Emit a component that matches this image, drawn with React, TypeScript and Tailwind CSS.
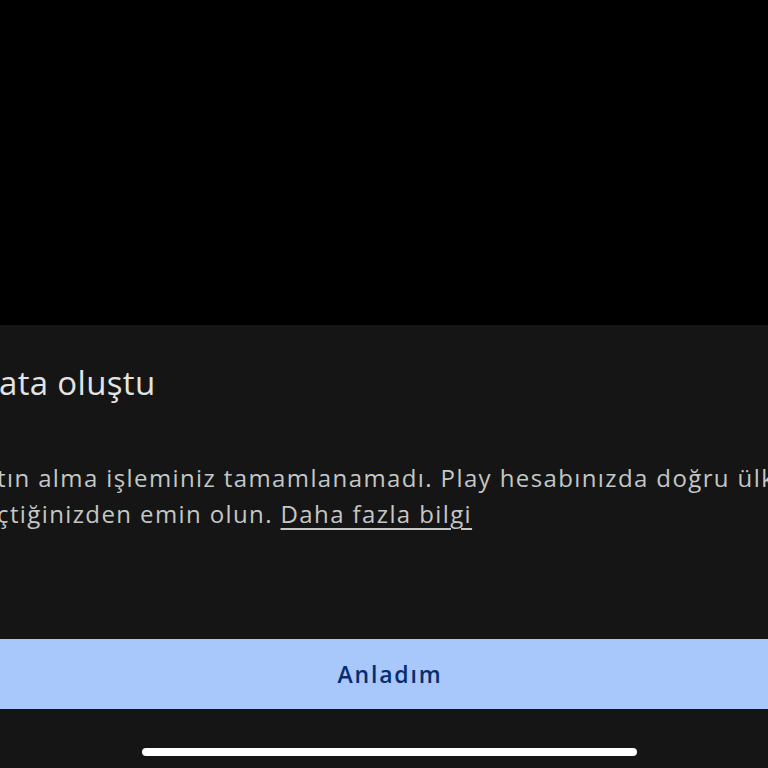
// Hata iletişim kutusu (bottom sheet) — ekranın yakınlaştırılmış hali.
const FONT = "font-['Open_Sans','Noto_Sans',sans-serif]";

export default function App() {
  return (
    <div className={`h-screen w-full overflow-hidden bg-black flex flex-col ${FONT}`}>
      <div className="h-[325px] shrink-0 bg-black" />

      <div className="flex-1 bg-[#151515] flex flex-col">
        <h2 className="mt-[36px] -ml-[1px] whitespace-nowrap text-[33px] leading-[44px] tracking-[0.01em] text-[#e3e3e3]">
          ata oluştu
        </h2>

        <div className="mt-[55px] -ml-[3px] whitespace-nowrap text-[24px] leading-[36px] tracking-[0.058em] text-[#c4c7c5]">
          <p>tın alma işleminiz tamamlanamadı. Play hesabınızda doğru ülkeyi</p>
          <p>
            çtiğinizden emin olun.{' '}
            <a href="#" className="underline underline-offset-[5px] decoration-[2px]">
              Daha fazla bilgi
            </a>
          </p>
        </div>

        <button className="mt-[107px] h-[70px] w-full shrink-0 bg-[#a8c7fa] pl-[12px] text-[23px] font-semibold tracking-[0.08em] text-[#062e6f]">
          Anladım
        </button>

        <div className="mt-[39px] flex shrink-0 justify-center pl-[11px]">
          <div className="h-[8px] w-[495px] rounded-full bg-white" />
        </div>
      </div>
    </div>
  );
}
